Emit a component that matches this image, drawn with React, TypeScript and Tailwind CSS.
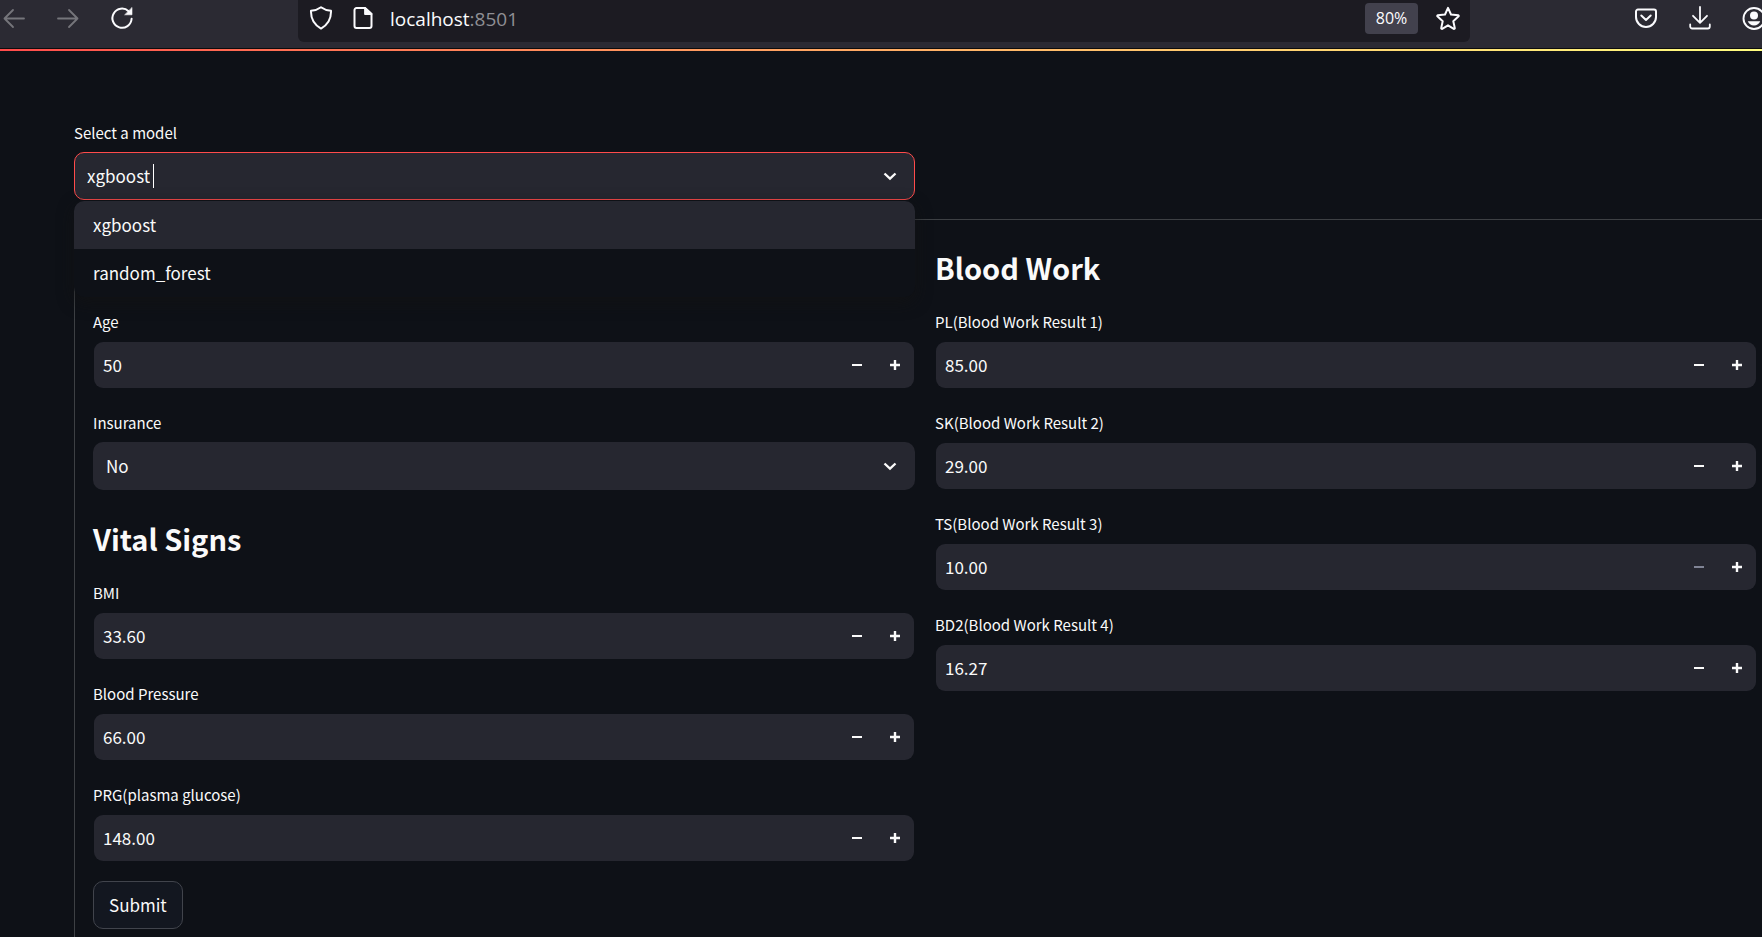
import { useState, type ReactNode } from 'react';

const FONT = "font-['Noto_Sans_CJK_SC','Source_Sans_Pro',sans-serif]";

function Glyph({ children, className = '' }: { children: ReactNode; className?: string }) {
  return (
    <svg
      aria-hidden="true"
      viewBox="0 0 24 24"
      className={`size-6 shrink-0 ${className}`}
      fill="none"
      stroke="currentColor"
      strokeWidth="1.8"
      strokeLinecap="round"
      strokeLinejoin="round"
    >
      {children}
    </svg>
  );
}

function BrowserBar() {
  return (
    <header className="shrink-0">
      <div className="flex h-12 items-start overflow-hidden bg-[#2b2a33] text-[#fbfbfe]">
        <nav className="flex h-9 w-[298px] shrink-0 items-center gap-[30px] pl-0.5" aria-label="Browser navigation">
          <button type="button" aria-label="Back" disabled className="text-[#75757b]">
            <Glyph>
              <path d="M22 12.5H2.500M11 4l-8.500 8.500 8.500 8.500" />
            </Glyph>
          </button>
          <button type="button" aria-label="Forward" disabled className="text-[#75757b]">
            <Glyph>
              <path d="M2 12.5h19.500M13 4l8.500 8.500-8.500 8.500" />
            </Glyph>
          </button>
          <button type="button" aria-label="Reload">
            <Glyph>
              <path d="M18.600 5.200A9.600 9.600 0 1 0 21.600 12.800" strokeWidth="2" />
              <path d="M22 1.800v7h-7z" fill="currentColor" strokeWidth="0.6" />
            </Glyph>
          </button>
        </nav>
        <div className="flex h-[42px] min-w-0 flex-1 items-center rounded-b-md bg-[#1c1b22] pr-2.5 pb-1.5 pl-[11px]">
          <Glyph>
            <path
              d="M12 1.200c2.800 2.100 6 3.200 10 3.600.3 7.700-2.800 13.700-10 17.800C4.800 18.500 1.700 12.500 2 4.800 6 4.400 9.200 3.300 12 1.200z"
              strokeWidth="2"
            />
          </Glyph>
          <Glyph className="ml-[18px]">
            <path d="M5.500 2h8.500l6.500 6v12a2 2 0 0 1-2 2H5.500a2 2 0 0 1-2-2V4a2 2 0 0 1 2-2z" strokeWidth="2" />
            <path d="M14 2l6.500 6h-6.500z" fill="currentColor" />
          </Glyph>
          <span className="ml-[15px] flex-1 pt-0.5 font-['Open_Sans',sans-serif] text-[19px] leading-9 text-[#8f8f94]">
            <span className="text-[#fbfbfe]">localhost</span>:8501
          </span>
          <button
            type="button"
            className="mr-[18px] h-[31px] w-[53px] rounded bg-[#42414d] font-['Open_Sans',sans-serif] text-[16px]"
          >
            80%
          </button>
          <button type="button" aria-label="Bookmark this page">
            <Glyph>
              <path
                d="M12 1.800l3 6.700 7.300.800a.600.600 0 0 1 .3 1L17.300 15.200l1.500 6.900a.700.700 0 0 1-1 .700L12 19.300l-5.800 3.500a.700.700 0 0 1-1-.700l1.500-6.900L1.400 10.300a.600.600 0 0 1 .3-1L9 8.500z"
                strokeWidth="2"
              />
            </Glyph>
          </button>
        </div>
        <div className="flex h-9 w-[292px] shrink-0 items-center justify-end gap-[30px]">
          <button type="button" aria-label="Save to Pocket">
            <Glyph>
              <path d="M4 3.500h16a2 2 0 0 1 2 2v5.500a10 10 0 0 1-20 0V5.500a2 2 0 0 1 2-2z" strokeWidth="2" />
              <path d="M7.300 9.500l4.700 4.500 4.700-4.500" strokeWidth="2" />
            </Glyph>
          </button>
          <button type="button" aria-label="Downloads">
            <Glyph>
              <path d="M12 1v15.500M5 9.800l7 7 7-7M2.200 18.500v2a2 2 0 0 0 2 2h15.600a2 2 0 0 0 2-2v-2" />
            </Glyph>
          </button>
          <button type="button" aria-label="Account" className="-mr-1">
            <Glyph>
              <circle cx="12" cy="12.500" r="10.500" strokeWidth="1.900" />
              <circle cx="12" cy="9.500" r="4" fill="currentColor" stroke="none" />
              <path d="M5.800 15.200h12.400c-1 2.600-3.300 4.200-6.200 4.200s-5.200-1.600-6.200-4.200z" fill="currentColor" stroke="none" />
            </Glyph>
          </button>
        </div>
      </div>
      <div className="h-px bg-[#0c0c0d]" />
      <div className="h-0.5 bg-linear-to-r from-[#ff4b4b] to-[#fffd80]" />
    </header>
  );
}

function Chevron() {
  return (
    <svg
      aria-hidden="true"
      viewBox="0 0 24 24"
      className="pointer-events-none size-6"
      fill="none"
      stroke="currentColor"
      strokeWidth="2.300"
    >
      <path d="M6.500 9.500l5.500 5.200 5.500-5.200" />
    </svg>
  );
}

function Label({ htmlFor, children }: { htmlFor: string; children: ReactNode }) {
  return (
    <label htmlFor={htmlFor} className="block h-[34px] text-[15px] leading-[29px]">
      {children}
    </label>
  );
}

interface NumberFieldProps {
  id: string;
  label: string;
  initial: number;
  digits?: number;
  min?: number;
}

function NumberField({ id, label, initial, digits = 2, min = 0 }: NumberFieldProps) {
  const [text, setText] = useState(initial.toFixed(digits));
  const value = Number(text) || 0;
  const step = digits === 0 ? 1 : 0.01;
  const change = (delta: number) => setText(Math.max(min, value + delta).toFixed(digits));

  return (
    <div>
      <Label htmlFor={id}>{label}</Label>
      <div className="flex h-12 items-stretch rounded-[10px] border border-transparent bg-[#262730] bg-clip-padding">
        <input
          id={id}
          inputMode="decimal"
          value={text}
          onChange={(e) => setText(e.target.value)}
          className="min-w-0 flex-1 bg-transparent pl-[9px] text-[17px] outline-none"
        />
        <button
          type="button"
          aria-label={`Decrease ${label}`}
          disabled={value <= min}
          onClick={() => change(-step)}
          className="flex w-[38px] items-center justify-center disabled:text-[#808495]"
        >
          <svg aria-hidden="true" viewBox="0 0 10 10" className="size-2.5" fill="currentColor">
            <path d="M0 4h10v2H0z" />
          </svg>
        </button>
        <button
          type="button"
          aria-label={`Increase ${label}`}
          onClick={() => change(step)}
          className="flex w-[38px] items-center justify-center"
        >
          <svg aria-hidden="true" viewBox="0 0 10 10" className="size-2.5" fill="currentColor">
            <path d="M0 3.800h3.800V0h2.400v3.800H10v2.400H6.200V10H3.800V6.200H0z" />
          </svg>
        </button>
      </div>
    </div>
  );
}

function SectionTitle({ children }: { children: ReactNode }) {
  return <h2 className="h-[50px] pt-[9px] text-[29px] leading-10 font-bold">{children}</h2>;
}

const MODELS = ['xgboost', 'random_forest'];

function ModelPicker() {
  const [model, setModel] = useState(MODELS[0]);
  return (
    <div>
      <Label htmlFor="model">Select a model</Label>
      <div className="relative">
        <div className="flex h-12 items-center rounded-[10px] border border-[#ff4b4b] bg-[#262730] px-3">
          <input
            id="model"
            role="combobox"
            aria-expanded="true"
            aria-controls="model-options"
            value={model}
            onChange={(e) => setModel(e.target.value)}
            className="field-sizing-content bg-transparent text-[17px] caret-transparent outline-none"
          />
          <span className="ml-[3px] h-6 w-px bg-white" />
          <span className="ml-auto">
            <Chevron />
          </span>
        </div>
        <ul
          id="model-options"
          role="listbox"
          className="absolute inset-x-0 top-full z-10 mt-px overflow-hidden rounded-[10px] bg-[#0e1117] shadow-[0_5px_16px_rgba(18,18,18,0.7)]"
        >
          {MODELS.map((name) => (
            <li
              key={name}
              role="option"
              aria-selected={name === model}
              onClick={() => setModel(name)}
              className="h-12 cursor-pointer pl-[19px] text-[17px] leading-12 aria-selected:bg-[#262730]"
            >
              {name}
            </li>
          ))}
        </ul>
      </div>
    </div>
  );
}

export default function App() {
  return (
    <div className={`flex h-screen flex-col overflow-hidden bg-[#0e1117] text-[#fafafa] ${FONT}`}>
      <BrowserBar />
      <main className="-mr-3.5 flex flex-col gap-[19px] pt-[67px] pl-[74px]">
        <div className="grid grid-cols-2 gap-5">
          <ModelPicker />
        </div>
        <form
          onSubmit={(e) => e.preventDefault()}
          className="rounded-[10px] border border-[#3d4044] p-[18px]"
        >
          <div className="grid grid-cols-2 gap-5">
            <div className="flex flex-col gap-[19px]">
              <div className="h-[50px]" />
              <NumberField id="age" label="Age" initial={50} digits={0} />
              <div>
                <Label htmlFor="insurance">Insurance</Label>
                <div className="relative">
                  <select
                    id="insurance"
                    defaultValue="No"
                    className="block h-12 w-full appearance-none rounded-[10px] bg-[#262730] pr-10 pl-[13px] text-[17px] outline-none"
                  >
                    <option>No</option>
                    <option>Yes</option>
                  </select>
                  <span className="pointer-events-none absolute inset-y-0 right-[13px] flex items-center">
                    <Chevron />
                  </span>
                </div>
              </div>
              <SectionTitle>Vital Signs</SectionTitle>
              <NumberField id="bmi" label="BMI" initial={33.6} />
              <NumberField id="bp" label="Blood Pressure" initial={66} />
              <NumberField id="prg" label="PRG(plasma glucose)" initial={148} />
            </div>
            <div className="flex flex-col gap-[19px]">
              <SectionTitle>Blood Work</SectionTitle>
              <NumberField id="pl" label="PL(Blood Work Result 1)" initial={85} />
              <NumberField id="sk" label="SK(Blood Work Result 2)" initial={29} />
              <NumberField id="ts" label="TS(Blood Work Result 3)" initial={10} min={10} />
              <NumberField id="bd2" label="BD2(Blood Work Result 4)" initial={16.27} />
            </div>
          </div>
          <button
            type="submit"
            className="mt-[19px] h-12 rounded-[10px] border border-[#41444c] bg-[#131720] px-[15px] text-[17px]"
          >
            Submit
          </button>
        </form>
      </main>
    </div>
  );
}
